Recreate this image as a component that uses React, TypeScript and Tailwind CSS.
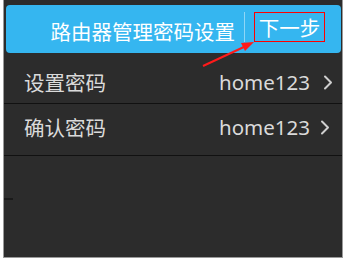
import React from "react";

const cjk = { fontFamily: '"Noto Sans CJK SC", "Noto Sans", sans-serif' };
const latin = { fontFamily: '"Noto Sans", "Noto Sans CJK SC", sans-serif' };

function Chevron() {
  return (
    <svg width="10" height="15" viewBox="0 0 10 15">
      <polyline points="2,1.5 8,7.5 2,13.5" fill="none" stroke="#cfcfcf" strokeWidth="2" strokeLinecap="round" strokeLinejoin="round" />
    </svg>
  );
}

export default function App() {
  return (
    <div className="w-[345px] h-[259px] bg-white pl-[3px] pr-[2px] pb-[1px]">
      <div className="relative h-full flex flex-col bg-[#2c2c2c] border-l border-r border-b border-[#9a9a9a]">
        {/* header */}
        <div className="mt-[5px] ml-[2px] mr-[1px] h-[48px] rounded-[4px] bg-[#35b6f0] flex items-start justify-end pr-[16px]">
          <div className="mt-[16px] text-[20.5px] leading-none text-white" style={cjk}>路由器管理密码设置</div>
          <div className="mt-[7px] ml-[9px] w-[1px] h-[30px] bg-[#8fd6f6]" />
          <div className="mt-[7px] ml-[9px] w-[71px] h-[30px] border border-[#ff0000] flex items-center justify-center text-[20.5px] leading-none text-white" style={cjk}>
            下一步
          </div>
        </div>
        {/* row 1 */}
        <div className="h-[51px] pt-[9px] flex items-center pl-[20px] pr-[9px] border-b border-[#111111]">
          <div className="text-[20.5px] leading-none text-[#dadada]" style={cjk}>设置密码</div>
          <div className="ml-auto text-[20.5px] leading-none text-[#dadada]" style={latin}>home123</div>
          <div className="ml-[13px]"><Chevron /></div>
        </div>
        {/* row 2 */}
        <div className="h-[52px] pb-[5px] flex items-center pl-[20px] pr-[12px] border-b border-[#111111]">
          <div className="text-[20.5px] leading-none text-[#dadada]" style={cjk}>确认密码</div>
          <div className="ml-auto text-[20.5px] leading-none text-[#dadada]" style={latin}>home123</div>
          <div className="ml-[10px]"><Chevron /></div>
        </div>
        <div className="flex-1">
          <div className="mt-[42px] w-[9px] h-[2px] bg-[#1a1a1a]" />
        </div>
        {/* annotation arrow */}
        <svg className="absolute left-0 top-0 pointer-events-none" width="340" height="258" viewBox="0 0 340 258">
          <line x1="199" y1="66" x2="242" y2="46" stroke="#ff1a1a" strokeWidth="2" />
          <polygon points="250,42 237,43 241,51" fill="#ff1a1a" />
        </svg>
      </div>
    </div>
  );
}
